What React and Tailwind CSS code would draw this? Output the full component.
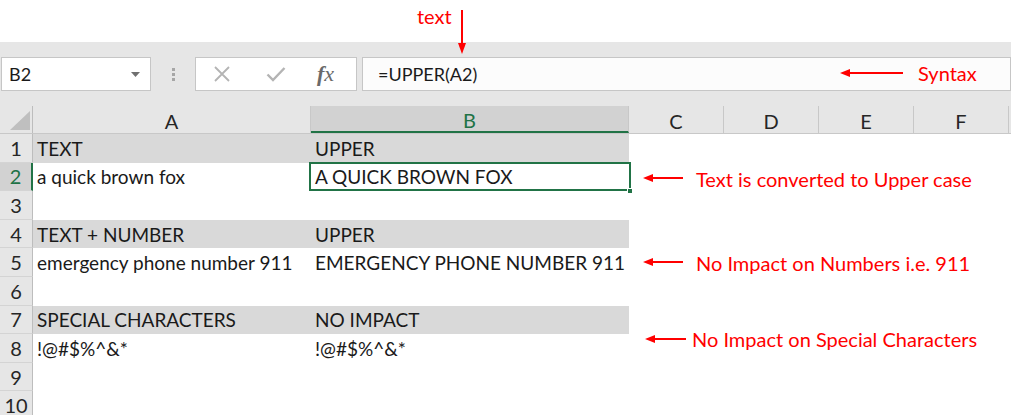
import React from "react";

const cols = [
  { l: "A", w: 278 },
  { l: "B", w: 318, sel: true },
  { l: "C", w: 95 },
  { l: "D", w: 95 },
  { l: "E", w: 95 },
  { l: "F", w: 95 },
];

const rows = [
  { a: "TEXT", b: "UPPER", fill: true },
  { a: "a quick brown fox", b: "A QUICK BROWN FOX", sel: true },
  { a: "", b: "" },
  { a: "TEXT + NUMBER", b: "UPPER", fill: true },
  { a: "emergency phone number 911", b: "EMERGENCY PHONE NUMBER 911" },
  { a: "", b: "" },
  { a: "SPECIAL CHARACTERS", b: "NO IMPACT", fill: true },
  { a: "!@#$%^&*", b: "!@#$%^&*" },
  { a: "", b: "" },
  { a: "", b: "" },
];

function LeftArrow({ x, y, w }) {
  return (
    <svg className="absolute" style={{ left: x, top: y - 6 }} width={w} height="12">
      <line x1="8" y1="6" x2={w} y2="6" stroke="#ff0000" strokeWidth="2" />
      <polygon points={`0,6 10,2 10,10`} fill="#ff0000" />
    </svg>
  );
}

export default function App() {
  const font = { fontFamily: "Lato, 'Liberation Sans', sans-serif" };
  return (
    <div className="relative w-[1011px] h-[415px] overflow-hidden bg-white text-[#1a1a1a]" style={font}>
      <div className="h-[42px] bg-white" />
      {/* formula toolbar */}
      <div className="h-[64px] bg-[#e6e6e6] pt-[15px] flex items-start">
        <div className="ml-[1px] w-[150px] h-[34px] bg-white border border-[#c6c6c6] flex items-center justify-between pl-[7px] pr-[10px]">
          <span className="text-[18px] leading-none">B2</span>
          <svg width="9" height="5"><polygon points="0,0 9,0 4.5,5" fill="#707070" /></svg>
        </div>
        <div className="w-[44px] h-[34px] flex flex-col items-center justify-center gap-[2px]">
          <span className="w-[3px] h-[3px] bg-[#a6a6a6]" />
          <span className="w-[3px] h-[3px] bg-[#a6a6a6]" />
          <span className="w-[3px] h-[3px] bg-[#a6a6a6]" />
        </div>
        <div className="w-[162px] h-[34px] bg-white border border-[#c6c6c6] flex items-center">
          <svg className="ml-[17px]" width="18" height="18" viewBox="0 0 18 18">
            <path d="M2 2 L16 16 M16 2 L2 16" stroke="#b4b4b4" strokeWidth="1.8" />
          </svg>
          <svg className="ml-[35px]" width="20" height="16" viewBox="0 0 20 16">
            <path d="M1.5 8.5 L7 14 L18.5 2" stroke="#b4b4b4" strokeWidth="2.4" fill="none" />
          </svg>
          <span className="ml-[31px] text-[22px] italic text-[#6a6a6a] leading-none" style={{ fontFamily: "'Liberation Serif', serif" }}>
            <span className="font-bold">f</span>x
          </span>
        </div>
        <div className="ml-[5px] flex-1 h-[34px] bg-[#fcfcfc] border border-[#c6c6c6] flex items-center pl-[15px]">
          <span className="text-[18px] leading-none">=UPPER(A2)</span>
        </div>
      </div>
      {/* grid */}
      <div className="flex flex-col">
        <div className="flex h-[28px] bg-[#e6e6e6] border-b border-[#c8c8c8]">
          <div className="relative w-[33px] h-full border-r border-[#bdbdbd]">
            <svg className="absolute left-[10px] top-[5px]" width="20" height="19">
              <polygon points="0,19 20,19 20,0" fill="#bfbfbf" />
            </svg>
          </div>
          {cols.map((c) => (
            <div
              key={c.l}
              className={`h-full flex items-center justify-center text-[20px] leading-none pt-[2px] border-r border-[#c8c8c8] ${c.sel ? "bg-[#d2d2d2] text-[#217346] border-b-2 border-b-[#217346]" : "text-[#262626]"}`}
              style={{ width: c.w }}
            >
              {c.l}
            </div>
          ))}
        </div>
        {rows.map((r, i) => (
          <div key={i} className="flex h-[28.6px]">
            <div
              className={`w-[33px] h-full flex items-center justify-center text-[20px] leading-none border-b border-[#d4d4d4] ${r.sel ? "bg-[#d2d2d2] text-[#217346] border-r-2 border-r-[#217346]" : "bg-[#e6e6e6] text-[#262626] border-r border-r-[#bdbdbd]"}`}
            >
              {i + 1}
            </div>
            <div className={`w-[278px] h-full flex items-center pl-[4px] text-[19px] leading-none whitespace-nowrap ${r.fill ? "bg-[#d9d9d9]" : ""}`}>
              {r.a}
            </div>
            <div className={`relative w-[318px] h-full flex items-center pl-[4px] text-[19px] leading-none whitespace-nowrap ${r.fill ? "bg-[#d9d9d9]" : ""}`}>
              {r.sel && (
                <>
                  <div className="absolute left-[-2px] top-[-1px] right-[-2px] bottom-0 border-2 border-[#217346]" />
                  <div className="absolute right-[-4px] bottom-[-3px] w-[6px] h-[6px] bg-[#217346] border border-white" />
                </>
              )}
              {r.b}
            </div>
          </div>
        ))}
      </div>
      {/* annotations */}
      <span className="absolute left-[417px] top-[1px] text-[20px] text-[#ff0000]">text</span>
      <svg className="absolute left-[456px] top-[10px]" width="12" height="44">
        <line x1="6" y1="0" x2="6" y2="34" stroke="#ff0000" strokeWidth="2" />
        <polygon points="6,44 2,33 10,33" fill="#ff0000" />
      </svg>
      <LeftArrow x={840} y={73} w={63} />
      <span className="absolute left-[918px] top-[58px] text-[20px] text-[#ff0000]">Syntax</span>
      <LeftArrow x={643} y={178} w={40} />
      <span className="absolute left-[696px] top-[164px] text-[20px] text-[#ff0000]">Text is converted to Upper case</span>
      <LeftArrow x={643} y={262} w={40} />
      <span className="absolute left-[696px] top-[248px] text-[20px] text-[#ff0000]">No Impact on Numbers i.e. 911</span>
      <LeftArrow x={645} y={339} w={41} />
      <span className="absolute left-[692px] top-[324px] text-[20px] text-[#ff0000]">No Impact on Special Characters</span>
    </div>
  );
}
